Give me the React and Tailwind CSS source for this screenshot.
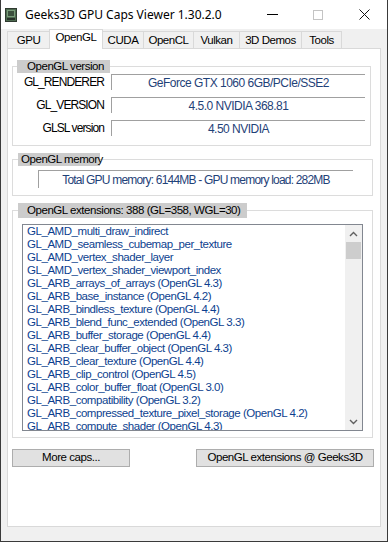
import React from "react";

const exts = [
  "GL_AMD_multi_draw_indirect",
  "GL_AMD_seamless_cubemap_per_texture",
  "GL_AMD_vertex_shader_layer",
  "GL_AMD_vertex_shader_viewport_index",
  "GL_ARB_arrays_of_arrays (OpenGL 4.3)",
  "GL_ARB_base_instance (OpenGL 4.2)",
  "GL_ARB_bindless_texture (OpenGL 4.4)",
  "GL_ARB_blend_func_extended (OpenGL 3.3)",
  "GL_ARB_buffer_storage (OpenGL 4.4)",
  "GL_ARB_clear_buffer_object (OpenGL 4.3)",
  "GL_ARB_clear_texture (OpenGL 4.4)",
  "GL_ARB_clip_control (OpenGL 4.5)",
  "GL_ARB_color_buffer_float (OpenGL 3.0)",
  "GL_ARB_compatibility (OpenGL 3.2)",
  "GL_ARB_compressed_texture_pixel_storage (OpenGL 4.2)",
  "GL_ARB_compute_shader (OpenGL 4.3)",
];

function Field({ children }) {
  return (
    <div className="w-[254px] h-[16px] border-t border-l border-[#a0a0a0] flex items-center justify-center text-[#1f4278] leading-none text-[12px] tracking-[-0.5px]">
      {children}
    </div>
  );
}

function Row({ label, value }) {
  return (
    <div className="flex items-center h-[16px]">
      <div className="w-[92px] text-right pr-[1px] leading-none text-[12px] tracking-[-0.9px]">{label}</div>
      <div className="ml-[6px]">
        <Field>{value}</Field>
      </div>
    </div>
  );
}

export default function App() {
  const tabs = [
    { t: "GPU", w: "w-[42px]" },
    { t: "OpenGL", w: "w-[54px]", sel: true },
    { t: "CUDA", w: "w-[40px]" },
    { t: "OpenCL", w: "w-[50px]" },
    { t: "Vulkan", w: "w-[46px]" },
    { t: "3D Demos", w: "w-[62px]" },
    { t: "Tools", w: "w-[41px]" },
  ];
  return (
    <div className="w-[388px] h-[542px] bg-[#f0f0f0] border-x border-b border-[#3a3a3a] flex flex-col overflow-hidden font-['Liberation_Sans',Arial,sans-serif] text-[11.5px] tracking-[-0.45px] text-black">
      {/* title bar */}
      <div className="h-[29px] bg-white flex items-center shrink-0">
        <svg width="12" height="14" viewBox="0 0 12 14" className="ml-[4px]">
          <rect x="0" y="0" width="12" height="14" fill="#2f3a30" />
          <rect x="1" y="1" width="10" height="12" fill="#4d6a4f" />
          <rect x="2" y="2" width="8" height="7" fill="#7a9c7a" />
          <rect x="3" y="3" width="6" height="5" fill="#3b4f3c" />
          <rect x="2" y="10" width="8" height="2" fill="#263027" />
        </svg>
        <span className="ml-[8px] font-['Noto_Sans',sans-serif] text-[12px] leading-none tracking-normal">
          Geeks3D GPU Caps Viewer 1.30.2.0
        </span>
        <div className="ml-auto flex h-full">
          <div className="w-[46px] h-full flex items-center justify-center">
            <div className="w-[11px] h-px bg-black" />
          </div>
          <div className="w-[46px] h-full flex items-center justify-center">
            <div className="w-[10px] h-[10px] border border-[#c4c4c4]" />
          </div>
          <div className="w-[46px] h-full flex items-center justify-center">
            <svg width="11" height="11" viewBox="0 0 11 11">
              <path d="M0.5 0.5 L10.5 10.5 M10.5 0.5 L0.5 10.5" stroke="#111" strokeWidth="1" />
            </svg>
          </div>
        </div>
      </div>

      {/* tab strip */}
      <div className="h-[19px] flex items-end pl-[6px] shrink-0">
        {tabs.map((tab, i) =>
          tab.sel ? (
            <div
              key={tab.t}
              className={`${tab.w} h-[20px] -mb-px relative z-10 bg-white border-x border-t border-[#d9d9d9] flex items-center justify-center pb-[3px] leading-none`}
            >
              {tab.t}
            </div>
          ) : (
            <div
              key={tab.t}
              className={`${tab.w} h-[17px] bg-[#f0f0f0] border-t border-[#d9d9d9] ${
                i === 2 ? "" : "border-l"
              } ${i === tabs.length - 1 ? "border-r" : ""} flex items-center justify-center pt-[1px] leading-none`}
            >
              {tab.t}
            </div>
          )
        )}
      </div>

      {/* panel */}
      <div className="ml-[6px] w-[374px] h-[479px] bg-white border border-[#d9d9d9] flex flex-col shrink-0">
        {/* OpenGL version */}
        <div className="ml-[4px] mt-[11px] flex flex-col">
          <div className="relative z-10 self-start ml-[5px] w-[93px] h-[13px] bg-[#cccccc] pl-[10px] flex items-center leading-none whitespace-nowrap">
            OpenGL version
          </div>
          <div className="-mt-[7px] w-[359px] border border-[#dcdcdc] pt-[7px] pb-[9px] flex flex-col gap-[7px]">
            <Row label="GL_RENDERER" value="GeForce GTX 1060 6GB/PCIe/SSE2" />
            <Row label="GL_VERSION" value="4.5.0 NVIDIA 368.81" />
            <Row label="GLSL version" value="4.50 NVIDIA" />
          </div>
        </div>

        {/* OpenGL memory */}
        <div className="ml-[4px] mt-[7px] flex flex-col">
          <div className="relative z-10 self-start ml-[6px] w-[82px] h-[13px] bg-[#cccccc] pl-[3px] flex items-center leading-none whitespace-nowrap">
            OpenGL memory
          </div>
          <div className="-mt-[7px] w-[361px] border border-[#dcdcdc] pt-[10px] pb-[7px]">
            <div className="ml-[25px] w-[315px] h-[18px] border-t border-l border-[#a0a0a0] flex items-center justify-center text-[#1f4278] leading-none text-[12px] tracking-[-0.8px]">
              Total GPU memory: 6144MB - GPU memory load: 282MB
            </div>
          </div>
        </div>

        {/* OpenGL extensions */}
        <div className="ml-[4px] mt-[7px] flex flex-col">
          <div className="relative z-10 self-start ml-[6px] w-[229px] h-[15px] bg-[#cccccc] pl-[9px] flex items-center leading-none whitespace-nowrap">
            OpenGL extensions: 388 (GL=358, WGL=30)
          </div>
          <div className="-mt-[8px] w-[361px] border border-[#dcdcdc] pt-[13px] pb-[6px]">
            <div className="ml-[9px] w-[341px] h-[207px] border border-[#828790] flex overflow-hidden">
              <div className="flex-1 pl-[4px] overflow-hidden text-[#0d3f8f]">
                {exts.map((e) => (
                  <div key={e} className="h-[13px] leading-[13px] whitespace-nowrap">
                    {e}
                  </div>
                ))}
              </div>
              <div className="w-[17px] bg-[#f0f0f0] flex flex-col">
                <div className="h-[17px] flex items-center justify-center">
                  <svg width="9" height="6" viewBox="0 0 9 6">
                    <path d="M1 5 L4.5 1.5 L8 5" fill="none" stroke="#606060" strokeWidth="1.4" />
                  </svg>
                </div>
                <div className="h-[17px] mx-[1px] bg-[#cdcdcd]" />
                <div className="flex-1" />
                <div className="h-[17px] flex items-center justify-center">
                  <svg width="9" height="6" viewBox="0 0 9 6">
                    <path d="M1 1 L4.5 4.5 L8 1" fill="none" stroke="#606060" strokeWidth="1.4" />
                  </svg>
                </div>
              </div>
            </div>
          </div>
        </div>

        {/* buttons */}
        <div className="ml-[4px] mt-[11px] flex items-center">
          <div className="w-[118px] h-[18px] bg-[#e1e1e1] border border-[#adadad] flex items-center justify-center leading-none">
            More caps...
          </div>
          <div className="ml-[66px] w-[178px] h-[18px] bg-[#e1e1e1] border border-[#adadad] flex items-center justify-center leading-none">
            OpenGL extensions @ Geeks3D
          </div>
        </div>
      </div>
    </div>
  );
}
